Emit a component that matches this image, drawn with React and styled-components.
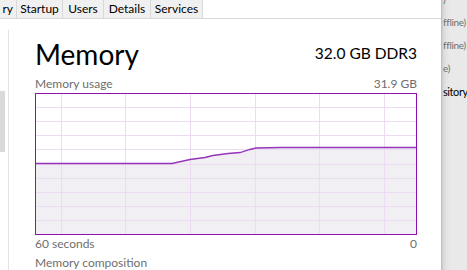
import React from "react";
import styled, { createGlobalStyle } from "styled-components";

const GlobalStyle = createGlobalStyle`
  html, body {
    margin: 0;
    padding: 0;
    width: 467px;
    height: 270px;
    overflow: hidden;
    background: #ffffff;
  }
  body {
    font-family: Lato, "Open Sans", sans-serif;
  }
`;

const Screen = styled.div`
  display: flex;
  width: 467px;
  height: 270px;
  overflow: hidden;
`;

const MainWindow = styled.div`
  width: 441px;
  display: flex;
  flex-direction: column;
  background: #ffffff;
`;

const TabStrip = styled.div`
  display: flex;
  height: 18px;
  border-bottom: 1px solid #d9d9d9;
  flex-shrink: 0;
`;

const Tab = styled.div`
  width: ${p => p.$w}px;
  box-sizing: border-box;
  background: #f0f0f0;
  border-right: 1px solid #d9d9d9;
  font-size: 12px;
  line-height: 18px;
  color: #000;
  text-align: ${p => (p.$cut ? "right" : "center")};
  padding-right: ${p => (p.$cut ? 3 : 0)}px;
  white-space: nowrap;
  overflow: hidden;
`;

const Body = styled.div`
  display: flex;
  flex: 1;
`;

const Sidebar = styled.div`
  width: 8px;
  padding-top: 72px;
`;

const ScrollThumb = styled.div`
  width: 5px;
  height: 61px;
  background: #d9d9d9;
`;

const Divider = styled.div`
  width: 1px;
  margin-top: 11px;
  background: #e3e3e3;
`;

const Content = styled.div`
  flex: 1;
  padding: 19px 24px 0 26px;
  display: flex;
  flex-direction: column;
`;

const Header = styled.div`
  display: flex;
  justify-content: space-between;
  align-items: flex-start;
  height: 32px;
`;

const Title = styled.div`
  font-size: 28px;
  line-height: 32px;
  color: #000;
`;

const Spec = styled.div`
  margin-top: 5px;
  font-size: 15.5px;
  line-height: 20px;
  color: #000;
`;

const LabelRow = styled.div`
  display: flex;
  justify-content: space-between;
  font-size: 12px;
  line-height: 14px;
  color: #6e6e6e;
  margin-top: ${p => p.$mt}px;
`;

const ChartBox = styled.div`
  margin-top: 2px;
  width: 382px;
  height: 142px;
  line-height: 0;
`;

const SidePanel = styled.div`
  flex: 1;
  background: linear-gradient(to right, #b9b9b9 0, #d6d7d6 2px, #e2e3e2 5px, #e8e9e8 9px);
  overflow: hidden;
  padding-left: 2px;
  display: flex;
  flex-direction: column;
`;

const SideText = styled.div`
  font-size: ${p => (p.$dark ? 11 : 10)}px;
  line-height: 23px;
  letter-spacing: ${p => (p.$dark ? -0.4 : -0.3)}px;
  color: ${p => (p.$dark ? "#000" : "#707070")};
  white-space: nowrap;
`;

const tabs = [
  { label: "ry", w: 17, cut: true },
  { label: "Startup", w: 46 },
  { label: "Users", w: 41 },
  { label: "Details", w: 47 },
  { label: "Services", w: 52 },
];

const W = 382;
const H = 142;
const hLines = Array.from({ length: 9 }, (_, i) => Math.round(14.1 * (i + 1)) + 0.5);
const vLines = [26, 90, 155, 220, 284, 349].map(x => x + 0.5);

const pts = [
  [1, 70.5],
  [137, 70.5],
  [155, 66.5],
  [170, 64.5],
  [178, 62.5],
  [193, 60.5],
  [205, 59.5],
  [215, 56.5],
  [221, 55],
  [246, 54.5],
  [381, 54.5],
];

const linePath = pts.map((p, i) => `${i ? "L" : "M"}${p[0]} ${p[1]}`).join(" ");
const fillPath = `${linePath} L381 141 L1 141 Z`;

const UsageChart = () => (
  <svg width={W} height={H} viewBox={`0 0 ${W} ${H}`}>
    <path d={fillPath} fill="#f2eff4" />
    {hLines.map(y => (
      <line key={"h" + y} x1="1" x2={W - 1} y1={y} y2={y} stroke="#ecdcf1" strokeWidth="1" />
    ))}
    {vLines.map(x => (
      <line key={"v" + x} x1={x} x2={x} y1="1" y2={H - 1} stroke="#ecdcf1" strokeWidth="1" />
    ))}
    <path d={linePath} fill="none" stroke="#9534b8" strokeWidth="1.3" />
    <rect x="0.5" y="0.5" width={W - 1} height={H - 1} fill="none" stroke="#8b12ae" strokeWidth="1" />
  </svg>
);

const App = () => (
  <Screen>
    <GlobalStyle />
    <MainWindow>
      <TabStrip>
        {tabs.map(t => (
          <Tab key={t.label} $w={t.w} $cut={t.cut}>
            {t.label}
          </Tab>
        ))}
      </TabStrip>
      <Body>
        <Sidebar>
          <ScrollThumb />
        </Sidebar>
        <Divider />
        <Content>
          <Header>
            <Title>Memory</Title>
            <Spec>32.0 GB DDR3</Spec>
          </Header>
          <LabelRow $mt={7}>
            <span>Memory usage</span>
            <span>31.9 GB</span>
          </LabelRow>
          <ChartBox>
            <UsageChart />
          </ChartBox>
          <LabelRow $mt={2}>
            <span>60 seconds</span>
            <span>0</span>
          </LabelRow>
          <LabelRow $mt={5}>
            <span>Memory composition</span>
          </LabelRow>
        </Content>
      </Body>
    </MainWindow>
    <SidePanel>
      <SideText style={{ marginTop: -12 }}>)</SideText>
      <SideText>ffline)</SideText>
      <SideText>ffline)</SideText>
      <SideText>e)</SideText>
      <SideText $dark>sitory</SideText>
    </SidePanel>
  </Screen>
);

export default App;
